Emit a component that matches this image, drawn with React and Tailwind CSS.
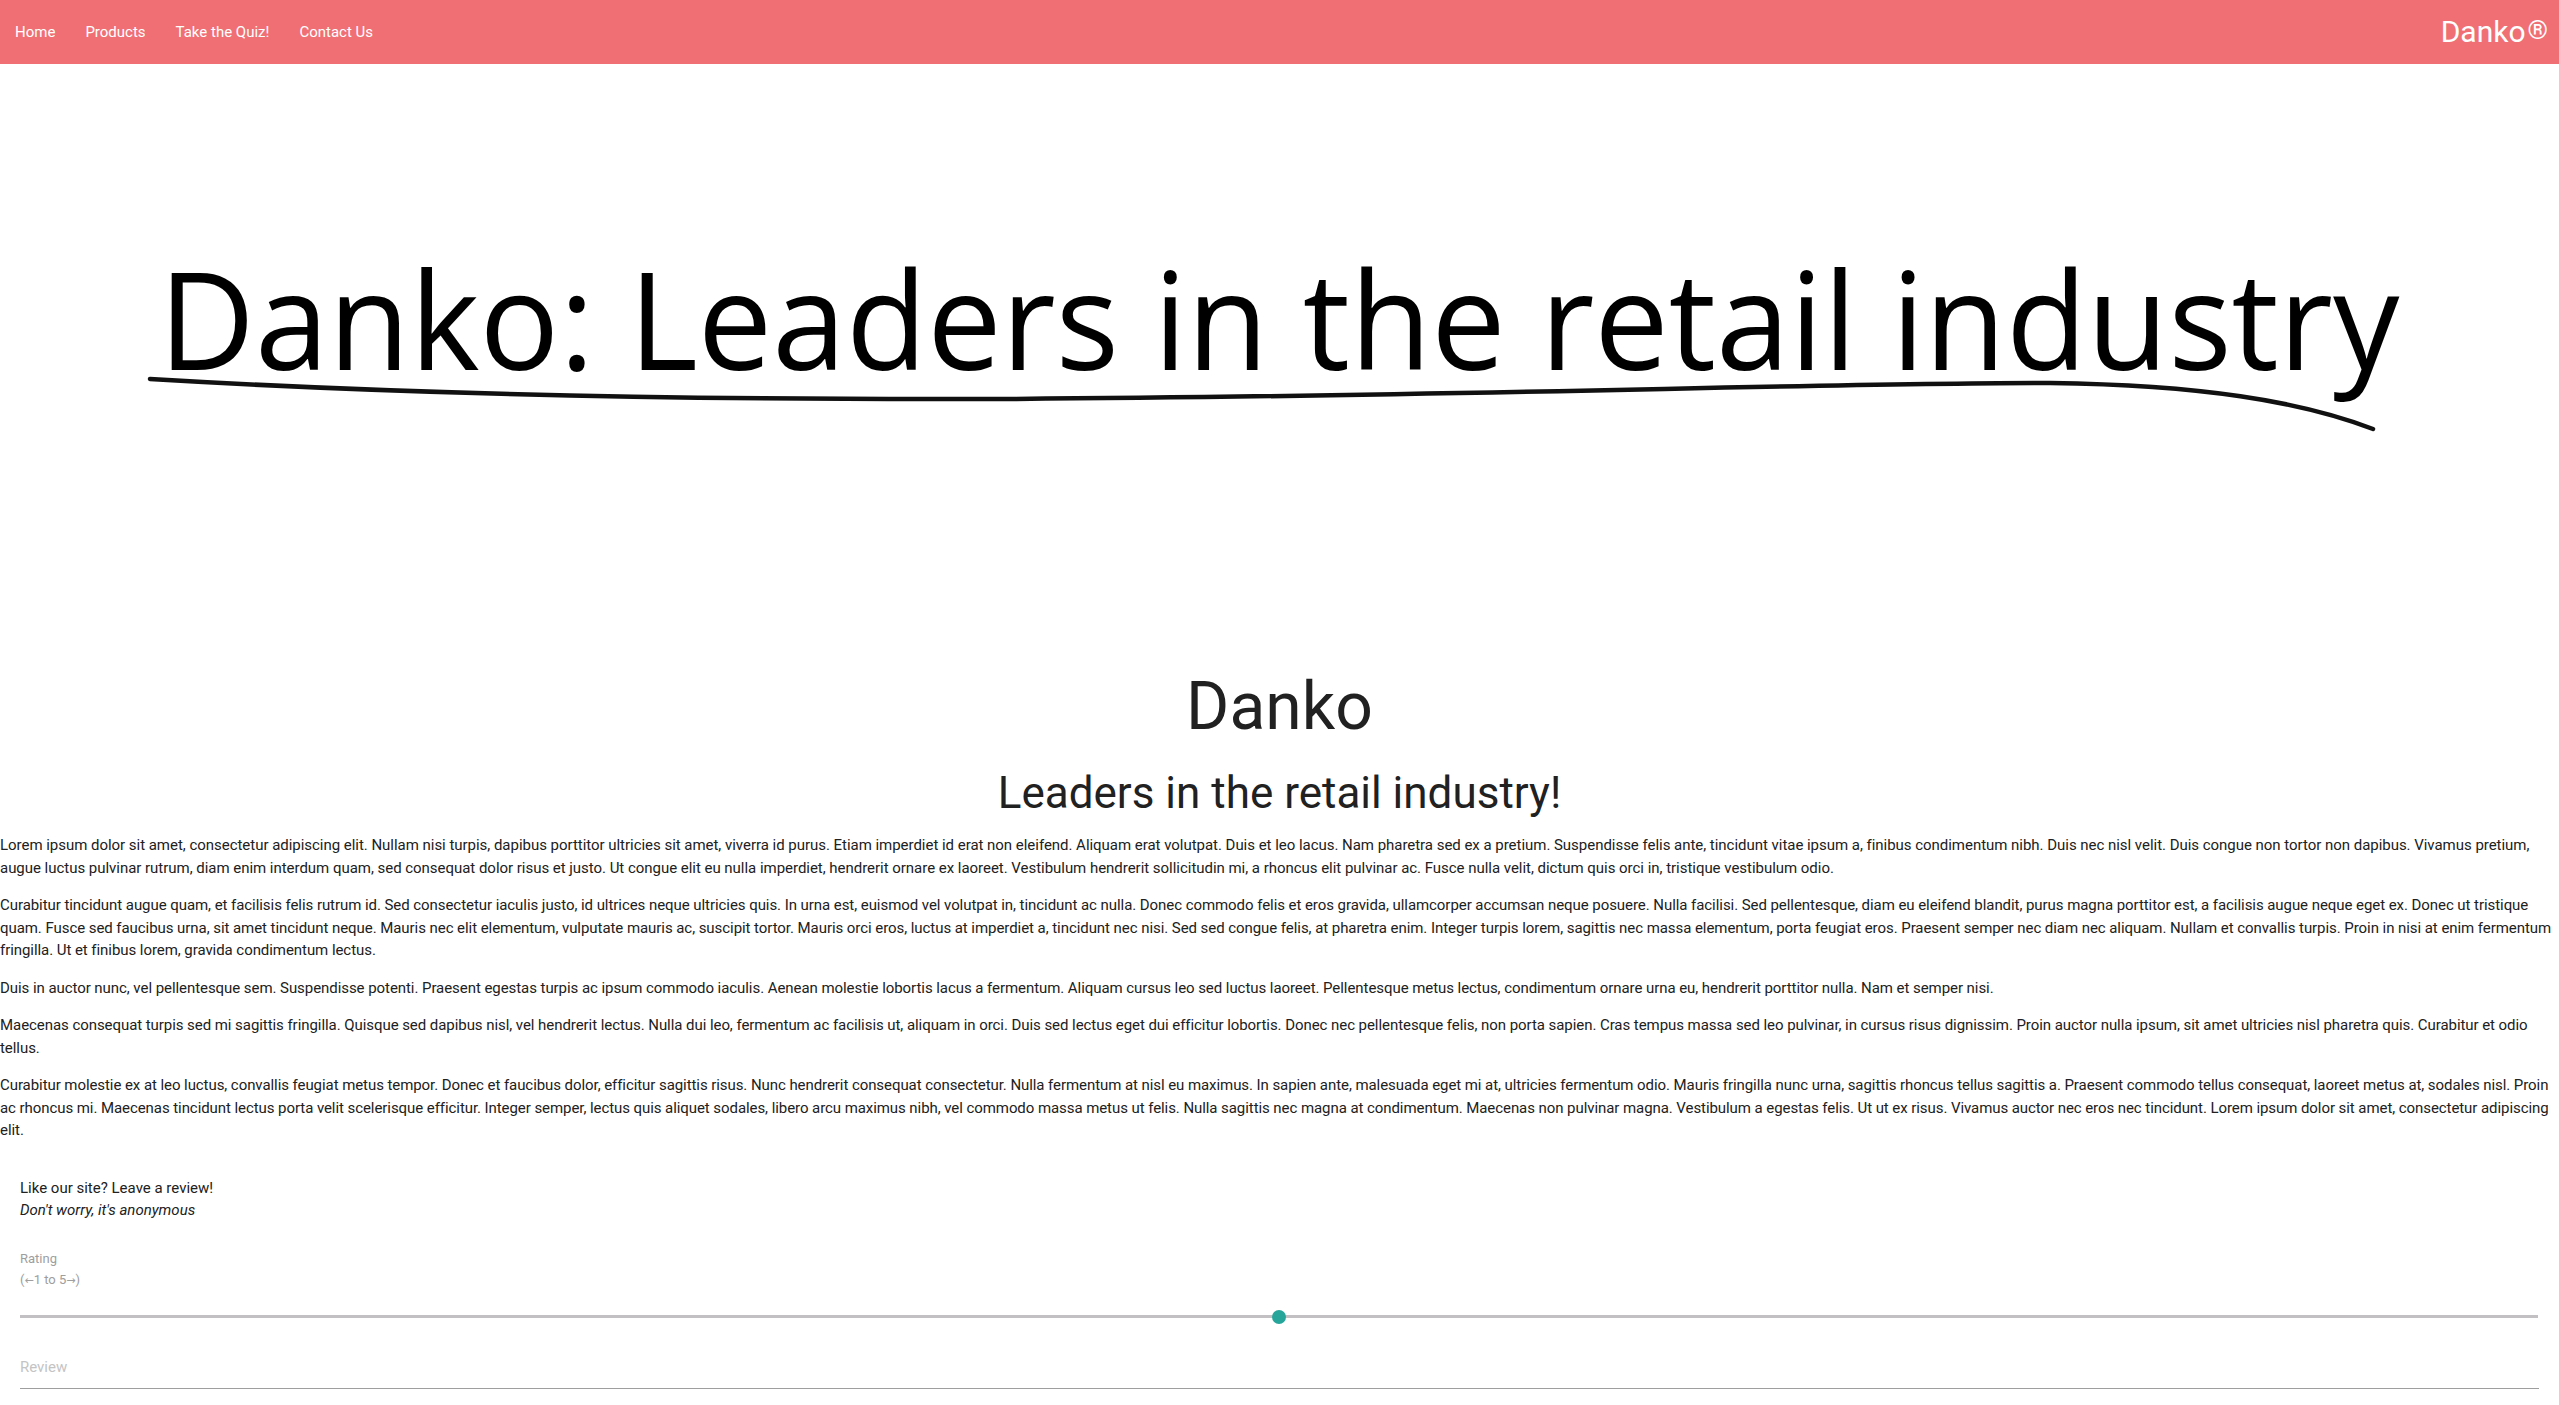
export default function App() {
  const paras = [
    {
      cls: "tracking-[-0.03px]",
      text: "Lorem ipsum dolor sit amet, consectetur adipiscing elit. Nullam nisi turpis, dapibus porttitor ultricies sit amet, viverra id purus. Etiam imperdiet id erat non eleifend. Aliquam erat volutpat. Duis et leo lacus. Nam pharetra sed ex a pretium. Suspendisse felis ante, tincidunt vitae ipsum a, finibus condimentum nibh. Duis nec nisl velit. Duis congue non tortor non dapibus. Vivamus pretium, augue luctus pulvinar rutrum, diam enim interdum quam, sed consequat dolor risus et justo. Ut congue elit eu nulla imperdiet, hendrerit ornare ex laoreet. Vestibulum hendrerit sollicitudin mi, a rhoncus elit pulvinar ac. Fusce nulla velit, dictum quis orci in, tristique vestibulum odio.",
    },
    {
      cls: "tracking-[-0.06px]",
      text: "Curabitur tincidunt augue quam, et facilisis felis rutrum id. Sed consectetur iaculis justo, id ultrices neque ultricies quis. In urna est, euismod vel volutpat in, tincidunt ac nulla. Donec commodo felis et eros gravida, ullamcorper accumsan neque posuere. Nulla facilisi. Sed pellentesque, diam eu eleifend blandit, purus magna porttitor est, a facilisis augue neque eget ex. Donec ut tristique quam. Fusce sed faucibus urna, sit amet tincidunt neque. Mauris nec elit elementum, vulputate mauris ac, suscipit tortor. Mauris orci eros, luctus at imperdiet a, tincidunt nec nisi. Sed sed congue felis, at pharetra enim. Integer turpis lorem, sagittis nec massa elementum, porta feugiat eros. Praesent semper nec diam nec aliquam. Nullam et convallis turpis. Proin in nisi at enim fermentum fringilla. Ut et finibus lorem, gravida condimentum lectus.",
    },
    {
      cls: "tracking-[-0.06px]",
      text: "Duis in auctor nunc, vel pellentesque sem. Suspendisse potenti. Praesent egestas turpis ac ipsum commodo iaculis. Aenean molestie lobortis lacus a fermentum. Aliquam cursus leo sed luctus laoreet. Pellentesque metus lectus, condimentum ornare urna eu, hendrerit porttitor nulla. Nam et semper nisi.",
    },
    {
      cls: "tracking-[-0.06px]",
      text: "Maecenas consequat turpis sed mi sagittis fringilla. Quisque sed dapibus nisl, vel hendrerit lectus. Nulla dui leo, fermentum ac facilisis ut, aliquam in orci. Duis sed lectus eget dui efficitur lobortis. Donec nec pellentesque felis, non porta sapien. Cras tempus massa sed leo pulvinar, in cursus risus dignissim. Proin auctor nulla ipsum, sit amet ultricies nisl pharetra quis. Curabitur et odio tellus.",
    },
    {
      cls: "tracking-[-0.07px]",
      text: "Curabitur molestie ex at leo luctus, convallis feugiat metus tempor. Donec et faucibus dolor, efficitur sagittis risus. Nunc hendrerit consequat consectetur. Nulla fermentum at nisl eu maximus. In sapien ante, malesuada eget mi at, ultricies fermentum odio. Mauris fringilla nunc urna, sagittis rhoncus tellus sagittis a. Praesent commodo tellus consequat, laoreet metus at, sodales nisl. Proin ac rhoncus mi. Maecenas tincidunt lectus porta velit scelerisque efficitur. Integer semper, lectus quis aliquet sodales, libero arcu maximus nibh, vel commodo massa metus ut felis. Nulla sagittis nec magna at condimentum. Maecenas non pulvinar magna. Vestibulum a egestas felis. Ut ut ex risus. Vivamus auctor nec eros nec tincidunt. Lorem ipsum dolor sit amet, consectetur adipiscing elit.",
    },
  ];

  return (
    <div className="min-h-screen bg-white font-['Roboto','Noto_Sans',sans-serif] text-[#212121]">
      <nav className="flex h-16 items-center justify-between bg-[#f06f75] text-white">
        <ul className="flex items-center">
          {["Home", "Products", "Take the Quiz!", "Contact Us"].map((l) => (
            <li key={l}>
              <a className="block px-[15px] text-[15px] leading-[64px]">{l}</a>
            </li>
          ))}
        </ul>
        <a className="flex items-start pr-[11px] text-[30px] leading-none">
          Danko<span className="ml-[2px] text-[26px] leading-none">®</span>
        </a>
      </nav>

      <div className="flex h-[607px] flex-col items-center">
        <div className="pt-[186px] font-['Open_Sans','Noto_Sans',sans-serif] text-[136px] leading-[136px] font-medium whitespace-nowrap text-black scale-x-[0.975]">
          Danko: Leaders in the retail industry
        </div>
        <svg className="-mt-[15px] block" width="2559" height="70" viewBox="0 0 2559 70">
          <path
            d="M150 8 C 400 23 700 29 1000 28 C 1500 25 1800 12 2050 12 C 2200 14 2300 30 2373 58"
            fill="none"
            stroke="#111"
            strokeWidth="4.5"
            strokeLinecap="round"
          />
        </svg>
      </div>

      <h1 className="text-center text-[66px] leading-[1.1] font-normal">Danko</h1>
      <h3 className="mt-[25.4px] text-center text-[44px] leading-[1.1] font-normal">
        Leaders in the retail industry!
      </h3>

      <div className="mt-[17px] flex flex-col gap-[15px]">
        {paras.map((p, i) => (
          <p key={i} className={"text-[15px] leading-[22.5px] " + p.cls}>
            {p.text}
          </p>
        ))}
      </div>

      <section className="mt-[35px] px-5 pb-10">
        <p className="text-[15px] leading-[22.5px]">Like our site? Leave a review!</p>
        <p className="text-[15px] leading-[22.5px] italic">Don't worry, it's anonymous</p>

        <div className="mt-[26px] text-[13px] leading-[21px] text-[#9e9e9e]">
          <div>Rating</div>
          <div>
            (<span className="font-['DejaVu_Sans',sans-serif] text-[11px]">←</span>1 to 5
            <span className="font-['DejaVu_Sans',sans-serif] text-[11px]">→</span>)
          </div>
        </div>

        <div className="mt-[19px] flex h-[14px] items-center pr-px">
          <div className="relative h-[3px] w-full bg-[#c2c0c2]">
            <span className="absolute top-1/2 left-1/2 h-[14px] w-[14px] -translate-x-1/2 -translate-y-1/2 rounded-full bg-[#26a69a]" />
          </div>
        </div>

        <div className="mt-[32px] text-[15px] leading-[22.5px] text-[#c4c4c4]">Review</div>
        <div className="h-[11px] border-b border-[#9e9e9e]" />
      </section>
    </div>
  );
}
